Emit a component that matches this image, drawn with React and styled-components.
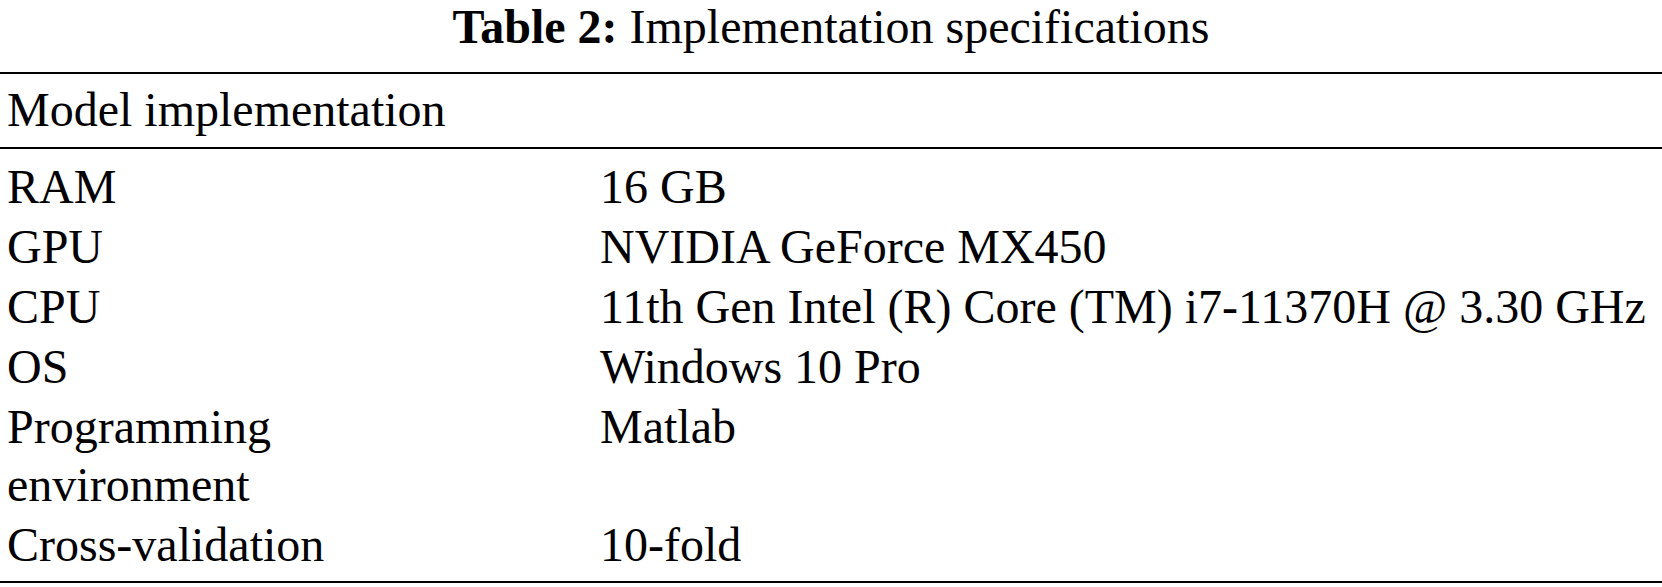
import styled, { createGlobalStyle } from "styled-components";

const GlobalStyle = createGlobalStyle`
  html, body {
    margin: 0;
    padding: 0;
    background: #fff;
  }
  body {
    font-family: "Liberation Serif", "Times New Roman", serif;
    color: #000;
  }
`;

const Wrapper = styled.div`
  width: 1662px;
`;

const Caption = styled.div`
  text-align: center;
  font-size: 48px;
  line-height: 53px;
  padding: 0 0 19px;
  white-space: nowrap;
`;

const Label = styled.span`
  font-weight: bold;
`;

const Table = styled.table`
  width: 100%;
  border-collapse: collapse;
  table-layout: fixed;
  font-size: 48px;
  line-height: 58px;
`;

const HeadCell = styled.th`
  text-align: left;
  font-weight: normal;
  padding: 7px 7px 8px;
  border-top: 2px solid #000;
  border-bottom: 2px solid #000;
`;

const Row = styled.tr`
  &:first-child td {
    padding-top: 9px;
  }
  &:last-child td {
    padding-bottom: 7px;
    border-bottom: 2px solid #000;
  }
`;

const Cell = styled.td`
  vertical-align: top;
  padding: 1px 7px;
  white-space: ${(p) => (p.$wrap ? "normal" : "nowrap")};
`;

const rows = [
  { name: "RAM", value: "16 GB" },
  { name: "GPU", value: "NVIDIA GeForce MX450" },
  {
    name: "CPU",
    value: "11th Gen Intel (R) Core (TM) i7-11370H @ 3.30 GHz",
  },
  { name: "OS", value: "Windows 10 Pro" },
  { name: "Programming environment", value: "Matlab", wrap: true },
  { name: "Cross-validation", value: "10-fold" },
];

const App = () => {
  return (
    <>
      <GlobalStyle />
      <Wrapper>
        <Caption>
          <Label>Table 2:</Label> Implementation specifications
        </Caption>
        <Table>
          <colgroup>
            <col style={{ width: 593 }} />
            <col />
          </colgroup>
          <thead>
            <tr>
              <HeadCell colSpan={2}>Model implementation</HeadCell>
            </tr>
          </thead>
          <tbody>
            {rows.map((row) => (
              <Row key={row.name}>
                <Cell $wrap={row.wrap}>
                  {row.wrap ? (
                    <>
                      Programming
                      <br />
                      environment
                    </>
                  ) : (
                    row.name
                  )}
                </Cell>
                <Cell>{row.value}</Cell>
              </Row>
            ))}
          </tbody>
        </Table>
      </Wrapper>
    </>
  );
};

export default App;
